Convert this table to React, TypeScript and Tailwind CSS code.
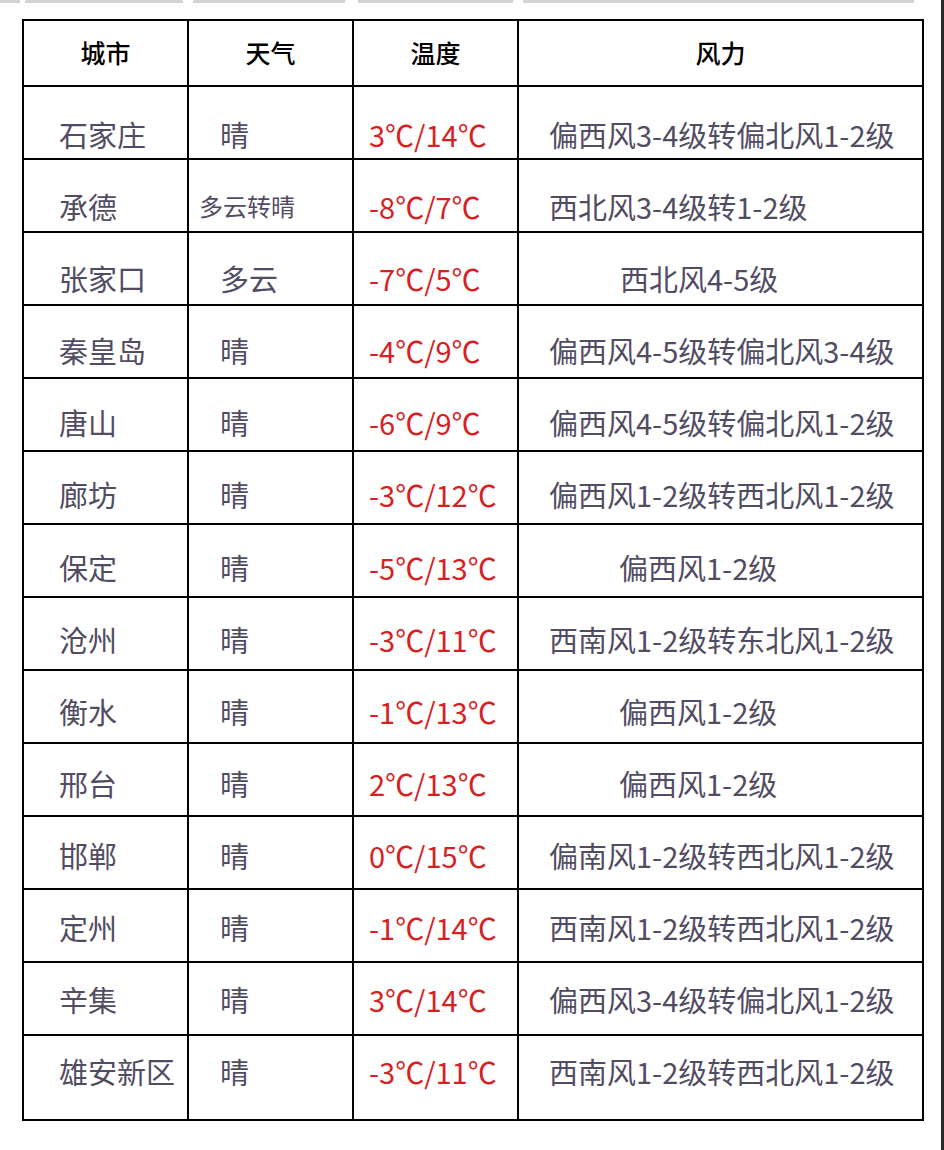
import React from "react";

type Row = {
  city: string;
  weather: string;
  weatherCls: string;
  temp: string;
  wind: string;
  windCls: string;
  pt: string;
};

const rows: Row[] = [
  { city: "石家庄", weather: "晴", weatherCls: "pl-[31px] text-[29px]", temp: "3℃/14℃", wind: "偏西风3-4级转偏北风1-2级", windCls: "pl-[30px]", pt: "pt-[27px]" },
  { city: "承德", weather: "多云转晴", weatherCls: "pl-[10px] text-[24px]", temp: "-8℃/7℃", wind: "西北风3-4级转1-2级", windCls: "pl-[30px]", pt: "pt-[26px]" },
  { city: "张家口", weather: "多云", weatherCls: "pl-[31px] text-[29px]", temp: "-7℃/5℃", wind: "西北风4-5级", windCls: "pl-[101px]", pt: "pt-[25px]" },
  { city: "秦皇岛", weather: "晴", weatherCls: "pl-[31px] text-[29px]", temp: "-4℃/9℃", wind: "偏西风4-5级转偏北风3-4级", windCls: "pl-[30px]", pt: "pt-[24px]" },
  { city: "唐山", weather: "晴", weatherCls: "pl-[31px] text-[29px]", temp: "-6℃/9℃", wind: "偏西风4-5级转偏北风1-2级", windCls: "pl-[30px]", pt: "pt-[23px]" },
  { city: "廊坊", weather: "晴", weatherCls: "pl-[31px] text-[29px]", temp: "-3℃/12℃", wind: "偏西风1-2级转西北风1-2级", windCls: "pl-[30px]", pt: "pt-[22px]" },
  { city: "保定", weather: "晴", weatherCls: "pl-[31px] text-[29px]", temp: "-5℃/13℃", wind: "偏西风1-2级", windCls: "pl-[100px]", pt: "pt-[22px]" },
  { city: "沧州", weather: "晴", weatherCls: "pl-[31px] text-[29px]", temp: "-3℃/11℃", wind: "西南风1-2级转东北风1-2级", windCls: "pl-[30px]", pt: "pt-[21px]" },
  { city: "衡水", weather: "晴", weatherCls: "pl-[31px] text-[29px]", temp: "-1℃/13℃", wind: "偏西风1-2级", windCls: "pl-[100px]", pt: "pt-[20px]" },
  { city: "邢台", weather: "晴", weatherCls: "pl-[31px] text-[29px]", temp: "2℃/13℃", wind: "偏西风1-2级", windCls: "pl-[100px]", pt: "pt-[19px]" },
  { city: "邯郸", weather: "晴", weatherCls: "pl-[31px] text-[29px]", temp: "0℃/15℃", wind: "偏南风1-2级转西北风1-2级", windCls: "pl-[30px]", pt: "pt-[18px]" },
  { city: "定州", weather: "晴", weatherCls: "pl-[31px] text-[29px]", temp: "-1℃/14℃", wind: "西南风1-2级转西北风1-2级", windCls: "pl-[30px]", pt: "pt-[17px]" },
  { city: "辛集", weather: "晴", weatherCls: "pl-[31px] text-[29px]", temp: "3℃/14℃", wind: "偏西风3-4级转偏北风1-2级", windCls: "pl-[30px]", pt: "pt-[16px]" },
  { city: "雄安新区", weather: "晴", weatherCls: "pl-[31px] text-[29px]", temp: "-3℃/11℃", wind: "西南风1-2级转西北风1-2级", windCls: "pl-[30px]", pt: "pt-[15px]" },
];

const font = { fontFamily: '"Noto Sans CJK SC", "Noto Sans", sans-serif' };

export default function App() {
  return (
    <div className="relative w-[944px] h-[1150px] bg-white overflow-hidden" style={font}>
      {/* top strip of previous table */}
      <div className="flex h-[3px] w-[944px]">
        <div className="w-[20px] bg-[#d2d2d6]" />
        <div className="w-[5px]" />
        <div className="w-[158px] bg-[#d2d2d6]" />
        <div className="w-[10px]" />
        <div className="w-[152px] bg-[#d2d2d6]" />
        <div className="w-[13px]" />
        <div className="w-[155px] bg-[#d2d2d6]" />
        <div className="w-[10px]" />
        <div className="w-[391px] bg-[#d2d2d6]" />
      </div>

      {/* right edge bar */}
      <div className="absolute right-0 top-0 h-[1150px] w-[3px] bg-[#2a2a2a]" />

      <div className="ml-[22px] mt-[16px] w-[902px] border-l-2 border-t-2 border-black">
        {/* header */}
        <div className="grid grid-cols-[165px_165px_165px_405px] h-[66px] text-black text-[25px] font-medium">
          <div className="flex items-center justify-center border-r-2 border-b-2 border-black">城市</div>
          <div className="flex items-center justify-center border-r-2 border-b-2 border-black">天气</div>
          <div className="flex items-center justify-center border-r-2 border-b-2 border-black">温度</div>
          <div className="flex items-center justify-center border-r-2 border-b-2 border-black">风力</div>
        </div>
        {rows.map((r, i) => (
          <div
            key={i}
            className={
              i === rows.length - 1
                ? "grid grid-cols-[165px_165px_165px_405px] h-[85px] text-[#524c62] leading-[40px]"
                : "grid grid-cols-[165px_165px_165px_405px] h-[73px] text-[#524c62] leading-[40px]"
            }
          >
            <div className={"border-r-2 border-b-2 border-black pl-[35px] text-[29px] whitespace-nowrap " + r.pt}>
              {r.city}
            </div>
            <div className={"border-r-2 border-b-2 border-black whitespace-nowrap " + r.pt + " " + r.weatherCls}>
              {r.weather}
            </div>
            <div className={"border-r-2 border-b-2 border-black pl-[15px] text-[29px] text-[#d8211f] whitespace-nowrap " + r.pt}>
              {r.temp}
            </div>
            <div className={"border-r-2 border-b-2 border-black text-[29px] whitespace-nowrap " + r.pt + " " + r.windCls}>
              {r.wind}
            </div>
          </div>
        ))}
      </div>
    </div>
  );
}
